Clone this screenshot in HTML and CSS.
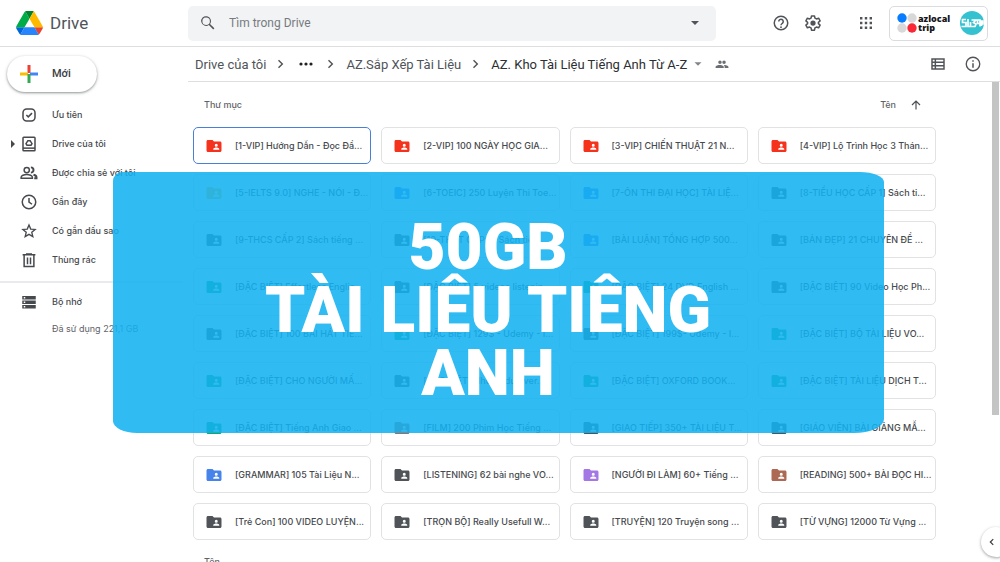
FILE: index.html
```
<!DOCTYPE html>
<html lang="vi">
<head>
<meta charset="utf-8">
<title>AZ. Kho Tài Liệu Tiếng Anh Từ A-Z - Drive</title>
<link rel="stylesheet" href="styles.css">
</head>
<body>
<svg class="defs" aria-hidden="true">
  <symbol id="folder" viewBox="0 0 24 24"><path fill="currentColor" d="M20 6h-8l-2-2H4C2.900 4 2 4.900 2 6v12c0 1.100.9 2 2 2h16c1.100 0 2-.9 2-2V8c0-1.100-.9-2-2-2z"/><path fill="#fff" d="M15 9a2 2 0 1 1 0 4 2 2 0 0 1 0-4zm4 8h-8v-1c0-1.330 2.670-2 4-2s4 .67 4 2z"/></symbol>
  <symbol id="chevron" viewBox="0 0 24 24"><path fill="currentColor" d="M9 5.500 7.500 7l5 5-5 5L9 18.500l6.500-6.500z"/></symbol>
  <symbol id="caret" viewBox="0 0 24 24"><path fill="currentColor" d="m6 9 6 6 6-6z"/></symbol>
</svg>
<div class="app">
  <header class="top">
    <a class="brand" href="#">
      <svg class="logo" viewBox="0 0 87.300 78" aria-hidden="true">
        <path fill="#0066da" d="m6.600 66.850 3.850 6.650c.8 1.400 1.950 2.500 3.300 3.300l13.750-23.800H0c0 1.550.4 3.100 1.200 4.500z"/>
        <path fill="#00ac47" d="M43.650 25 29.900 1.200c-1.350.8-2.500 1.900-3.300 3.300L1.200 48.500A9 9 0 0 0 0 53h27.500z"/>
        <path fill="#ea4335" d="M73.550 76.800c1.350-.8 2.500-1.900 3.300-3.300l1.600-2.750L86.100 57.500c.8-1.400 1.200-2.950 1.200-4.500H59.800l5.850 11.500z"/>
        <path fill="#00832d" d="M43.650 25 57.400 1.200C56.050.4 54.500 0 52.900 0H34.400c-1.600 0-3.150.45-4.500 1.200z"/>
        <path fill="#2684fc" d="M59.800 53H27.500L13.750 76.800c1.350.8 2.900 1.200 4.500 1.200h50.800c1.600 0 3.150-.45 4.500-1.200z"/>
        <path fill="#ffba00" d="m73.400 26.500-12.700-22c-.8-1.400-1.950-2.500-3.300-3.300L43.650 25 59.800 53h27.450c0-1.550-.4-3.100-1.200-4.500z"/>
      </svg>
      <span>Drive</span>
    </a>
    <form class="search" role="search">
      <button type="button" class="icon-btn" aria-label="Tìm kiếm"><svg class="i18" viewBox="0 0 24 24"><path fill="currentColor" d="M20.500 19 14.700 13.200A6.500 6.500 0 1 0 13.200 14.700L19 20.500zM4.500 9.500a5 5 0 1 1 10 0 5 5 0 0 1-10 0z"/></svg></button>
      <input type="text" aria-label="Tìm trong Drive" placeholder="Tìm trong Drive">
      <button type="button" class="icon-btn" aria-label="Tùy chọn tìm kiếm"><svg class="i16"><use href="#caret"/></svg></button>
    </form>
    <nav class="tools" aria-label="Công cụ">
      <button type="button" class="icon-btn" aria-label="Trợ giúp"><svg class="i18" viewBox="0 0 24 24"><circle cx="12" cy="12" r="9" fill="none" stroke="currentColor" stroke-width="2"/><path d="M9 10a3 3 0 1 1 4.800 2.400C12.700 13.300 12 13.700 12 15" fill="none" stroke="currentColor" stroke-width="2"/><circle cx="12" cy="17.500" r="1.200" fill="currentColor"/></svg></button>
      <button type="button" class="icon-btn" aria-label="Cài đặt"><svg class="i18" viewBox="0 0 24 24"><path d="M10 2.500h4l.6 3 2 1.100 2.900-1 2 3.500-2.300 2v1.800l2.300 2-2 3.500-2.900-1-2 1.100-.6 3h-4l-.6-3-2-1.100-2.900 1-2-3.500 2.300-2v-1.800l-2.300-2 2-3.500 2.900 1 2-1.100z" fill="none" stroke="currentColor" stroke-width="2" stroke-linejoin="round"/><circle cx="12" cy="12" r="3.500" fill="currentColor"/></svg></button>
      <button type="button" class="icon-btn apps" aria-label="Ứng dụng"><svg class="i18" viewBox="0 0 24 24"><path fill="currentColor" d="M4 4h3.200v3.200H4zm6.400 0h3.200v3.200h-3.200zm6.400 0H20v3.200h-3.200zM4 10.400h3.200v3.200H4zm6.400 0h3.200v3.200h-3.200zm6.400 0H20v3.200h-3.200zM4 16.800h3.200V20H4zm6.400 0h3.200V20h-3.200zm6.400 0H20V20h-3.200z"/></svg></button>
    </nav>
    <button type="button" class="account" aria-label="Tài khoản">
      <svg class="dots" viewBox="0 0 20 20"><circle cx="5" cy="5" r="4.700" fill="#087cff"/><circle cx="15" cy="5" r="4.700" fill="#d8d8d8"/><circle cx="5" cy="15" r="4.700" fill="#d8d8d8"/><circle cx="15" cy="15" r="4.700" fill="#fa2836"/></svg>
      <span class="org">azlocal<br>trip</span>
      <svg class="avatar" viewBox="0 0 24 24" aria-hidden="true"><circle cx="12" cy="12" r="12" fill="#35c2d0"/><g fill="none" stroke="#fff" stroke-width="1.700"><path d="M6 8.500H2.500v3H6v4H1.500M8 8v7.500h2.500V11M11.500 9H16l-2.500 2.500 2.500 1.500-1 2.500h-3.500M20 12.500h-2.500V9H20v6.500M21.500 15v-5h1.500v3h-1.500"/></g></svg>
    </button>
  </header>

  <aside class="side">
    <button type="button" class="new"><svg class="plus" viewBox="0 0 18 18"><path fill="#ea4335" d="M7.500 0h3v8h-3z"/><path fill="#fbbc04" d="M0 7.500h8v3H0z"/><path fill="#4285f4" d="M10 7.500h8v3h-8z"/><path fill="#34a853" d="M7.500 10.500V9h3v9h-3z"/></svg>Mới</button>
    <nav class="menu" aria-label="Thư mục chính">
      <a href="#"><i></i><svg class="i18" viewBox="0 0 24 24"><rect x="4" y="4" width="16" height="16" rx="5" fill="none" stroke="currentColor" stroke-width="2"/><path d="m8.500 12 2.500 2.500 5-5" fill="none" stroke="currentColor" stroke-width="2"/></svg>Ưu tiên</a>
      <a href="#"><i class="open"></i><svg class="i18" viewBox="0 0 24 24"><rect x="4" y="3" width="16" height="18" rx="1" fill="none" stroke="currentColor" stroke-width="2"/><path d="M4 17.500h16" stroke="currentColor" stroke-width="2"/><path d="M10.500 7.500h3l2.500 4-1.300 2H9.300L8 11.500z" fill="none" stroke="currentColor" stroke-width="2"/></svg>Drive của tôi</a>
      <a href="#"><i></i><svg class="i18" viewBox="0 0 24 24"><g fill="none" stroke="currentColor" stroke-width="2"><circle cx="9" cy="8" r="3.500"/><path d="M1.500 19v-1.500c0-2 4-3.500 7.500-3.500s7.500 1.500 7.500 3.500V19z"/><path d="M14.500 4.500a3.500 3.500 0 0 1 0 7M18 14.300c2.500.7 4 1.900 4 3.200V19h-3" stroke-width="2.600"/></g></svg>Được chia sẻ với tôi</a>
      <a href="#"><i></i><svg class="i18" viewBox="0 0 24 24"><g fill="none" stroke="currentColor" stroke-width="2"><circle cx="12" cy="12" r="9"/><path d="M12 6.500V12l4 3"/></g></svg>Gần đây</a>
      <a href="#"><i></i><svg class="i18" viewBox="0 0 24 24"><path d="m12 4 2.300 5.400 5.900.5-4.500 3.900 1.400 5.700-5.100-3-5.100 3 1.400-5.700-4.500-3.900 5.900-.5z" fill="none" stroke="currentColor" stroke-width="1.800"/></svg>Có gắn dấu sao</a>
      <a href="#"><i></i><svg class="i18" viewBox="0 0 24 24"><path d="M5.500 6v14.500h13V6M3.500 5h17M8 4h8M10 8.500v9M14 8.500v9" fill="none" stroke="currentColor" stroke-width="2"/></svg>Thùng rác</a>
    </nav>
    <div class="storage">
      <a href="#"><i></i><svg class="i18" viewBox="0 0 24 24"><path fill="currentColor" d="M3 4h18v4.500H3zM3 10h18v4.500H3zM3 16h18v4.500H3z"/><path fill="#fff" d="M5 5.300h2v2H5zM5 11.300h2v2H5zM5 17.300h2v2H5z"/></svg>Bộ nhớ</a>
      <p>Đã sử dụng 221,1 GB</p>
    </div>
  </aside>

  <main class="main">
    <div class="path">
      <nav class="crumbs" aria-label="Đường dẫn">
        <a href="#">Drive của tôi</a>
        <svg class="sep"><use href="#chevron"/></svg>
        <button type="button" class="more" aria-label="Thêm"><svg viewBox="0 0 14 4"><circle cx="2" cy="2" r="1.600"/><circle cx="7" cy="2" r="1.600"/><circle cx="12" cy="2" r="1.600"/></svg></button>
        <svg class="sep"><use href="#chevron"/></svg>
        <a href="#">AZ.Sắp Xếp Tài Liệu</a>
        <svg class="sep"><use href="#chevron"/></svg>
        <a href="#" class="here">AZ. Kho Tài Liệu Tiếng Anh Từ A-Z</a>
      </nav>
      <svg class="drop"><use href="#caret"/></svg>
      <svg class="people" viewBox="0 0 24 24"><path fill="currentColor" d="M8.500 6a3 3 0 1 1 0 6 3 3 0 0 1 0-6zm7 0a3 3 0 1 1 0 6 3 3 0 0 1 0-6zM1 19v-2.500c0-2 4.500-3 7-3s7 1 7 3V19zm15.500 0v-2.500c0-1.300-.6-2.200-1.500-3 3 0 8 1 8 3V19z"/></svg>
      <div class="views">
        <button type="button" class="icon-btn" aria-label="Dạng danh sách"><svg class="i16" viewBox="0 0 24 24"><path d="M3 4.500h18v15H3zM3 9.500h18M3 14.500h18M8 4.500v15" fill="none" stroke="currentColor" stroke-width="2.200"/></svg></button>
        <button type="button" class="icon-btn" aria-label="Chi tiết"><svg class="i18" viewBox="0 0 24 24"><circle cx="12" cy="12" r="9" fill="none" stroke="currentColor" stroke-width="1.800"/><path fill="currentColor" d="M11 7h2v2h-2zm0 4h2v6h-2z"/></svg></button>
      </div>
    </div>
    <div class="scroll">
      <div class="content">
        <div class="heading">
          <h2>Thư mục</h2>
          <button type="button" class="sort">Tên<svg viewBox="0 0 24 24"><path d="M12 21V4M4 12l8-8 8 8" fill="none" stroke="currentColor" stroke-width="2.400"/></svg></button>
        </div>
        <div class="grid">
          <button type="button" class="card red on"><svg><use href="#folder"/></svg><span>[1-VIP] Hướng Dẫn - Đọc Đầ...</span></button>
          <button type="button" class="card red"><svg><use href="#folder"/></svg><span>[2-VIP] 100 NGÀY HỌC GIA...</span></button>
          <button type="button" class="card red"><svg><use href="#folder"/></svg><span>[3-VIP] CHIẾN THUẬT 21 N...</span></button>
          <button type="button" class="card red"><svg><use href="#folder"/></svg><span>[4-VIP] Lộ Trình Học 3 Thán...</span></button>
          <button type="button" class="card yellow"><svg><use href="#folder"/></svg><span>[5-IELTS 9.0] NGHE - NÓI - Đ...</span></button>
          <button type="button" class="card blue"><svg><use href="#folder"/></svg><span>[6-TOEIC] 250 Luyện Thi Toe...</span></button>
          <button type="button" class="card blue"><svg><use href="#folder"/></svg><span>[7-ÔN THI ĐẠI HỌC] TÀI LIỆ...</span></button>
          <button type="button" class="card"><svg><use href="#folder"/></svg><span>[8-TIỂU HỌC CẤP 1] Sách ti...</span></button>
          <button type="button" class="card"><svg><use href="#folder"/></svg><span>[9-THCS CẤP 2] Sách tiếng ...</span></button>
          <button type="button" class="card"><svg><use href="#folder"/></svg><span>[10-THPT CẤP 3] Sách tiến...</span></button>
          <button type="button" class="card blue"><svg><use href="#folder"/></svg><span>[BÀI LUẬN] TỔNG HỢP 500...</span></button>
          <button type="button" class="card"><svg><use href="#folder"/></svg><span>[BẢN ĐẸP] 21 CHUYÊN ĐỀ ...</span></button>
          <button type="button" class="card teal"><svg><use href="#folder"/></svg><span>[ĐẶC BIỆT] Effortless Englis...</span></button>
          <button type="button" class="card"><svg><use href="#folder"/></svg><span>[ĐẶC BIỆT] 5 videos listenin...</span></button>
          <button type="button" class="card teal"><svg><use href="#folder"/></svg><span>[ĐẶC BIỆT] 24 DVD English ...</span></button>
          <button type="button" class="card"><svg><use href="#folder"/></svg><span>[ĐẶC BIỆT] 90 Video Học Ph...</span></button>
          <button type="button" class="card"><svg><use href="#folder"/></svg><span>[ĐẶC BIỆT] 100 BÀI HÁT TIẾ...</span></button>
          <button type="button" class="card teal"><svg><use href="#folder"/></svg><span>[ĐẶC BIỆT] 129$ - Udemy - I...</span></button>
          <button type="button" class="card"><svg><use href="#folder"/></svg><span>[ĐẶC BIỆT] 199$- Udemy - I...</span></button>
          <button type="button" class="card teal"><svg><use href="#folder"/></svg><span>[ĐẶC BIỆT] BỘ TÀI LIỆU VO...</span></button>
          <button type="button" class="card teal"><svg><use href="#folder"/></svg><span>[ĐẶC BIỆT] CHO NGƯỜI MẤ...</span></button>
          <button type="button" class="card"><svg><use href="#folder"/></svg><span>[ĐẶC BIỆT] Những duo ver...</span></button>
          <button type="button" class="card teal"><svg><use href="#folder"/></svg><span>[ĐẶC BIỆT] OXFORD BOOK...</span></button>
          <button type="button" class="card teal"><svg><use href="#folder"/></svg><span>[ĐẶC BIỆT] TÀI LIỆU DỊCH T...</span></button>
          <button type="button" class="card teal"><svg><use href="#folder"/></svg><span>[ĐẶC BIỆT] Tiếng Anh Giao ...</span></button>
          <button type="button" class="card brown"><svg><use href="#folder"/></svg><span>[FILM] 200 Phim Học Tiếng ...</span></button>
          <button type="button" class="card"><svg><use href="#folder"/></svg><span>[GIAO TIẾP] 350+ TÀI LIỆU T...</span></button>
          <button type="button" class="card"><svg><use href="#folder"/></svg><span>[GIÁO VIÊN] BÀI GIẢNG MẪ...</span></button>
          <button type="button" class="card blue"><svg><use href="#folder"/></svg><span>[GRAMMAR] 105 Tài Liệu N...</span></button>
          <button type="button" class="card"><svg><use href="#folder"/></svg><span>[LISTENING] 62 bài nghe VO...</span></button>
          <button type="button" class="card purple"><svg><use href="#folder"/></svg><span>[NGƯỜI ĐI LÀM] 60+ Tiếng ...</span></button>
          <button type="button" class="card brown"><svg><use href="#folder"/></svg><span>[READING] 500+ BÀI ĐỌC HI...</span></button>
          <button type="button" class="card"><svg><use href="#folder"/></svg><span>[Trẻ Con] 100 VIDEO LUYỆN...</span></button>
          <button type="button" class="card"><svg><use href="#folder"/></svg><span>[TRỌN BỘ] Really Usefull W...</span></button>
          <button type="button" class="card"><svg><use href="#folder"/></svg><span>[TRUYỆN] 120 Truyện song ...</span></button>
          <button type="button" class="card"><svg><use href="#folder"/></svg><span>[TỪ VỰNG] 12000 Từ Vựng ...</span></button>
        </div>
        <h2 class="files">Tên</h2>
      </div>
      <div class="track"><div class="thumb"></div></div>
    </div>
  </main>
  <button type="button" class="panel" aria-label="Hiện bảng điều khiển bên"><svg viewBox="0 0 24 24"><path d="m15 5-7 7 7 7" fill="none" stroke="currentColor" stroke-width="3"/></svg></button>
  <section class="banner"><h1>50GB<br>TÀI LIÊU TIÊNG<br>ANH</h1></section>
</div>
</body>
</html>
```
FILE: styles.css
```
* { box-sizing: border-box; }
body { margin: 0; font-family: Roboto, "Noto Sans", sans-serif; color: #3c4043; background: #fff; }
button, input { font: inherit; color: inherit; border: 0; background: none; padding: 0; margin: 0; }
a { color: inherit; text-decoration: none; }
h1, h2, p { margin: 0; }
svg { display: block; flex: none; }
.defs { position: absolute; width: 0; height: 0; }
.i18 { width: 18px; height: 18px; }
.i16 { width: 16px; height: 16px; }
.icon-btn { display: flex; color: #505459; }

.app { position: relative; display: grid; grid-template: 47px minmax(0, 1fr) / 188px minmax(0, 1fr); height: 100vh; overflow: hidden; }

.top { grid-column: 1 / 3; display: flex; align-items: center; border-bottom: 1px solid #dcdee0; padding-right: 12px; }
.brand { width: 188px; flex: none; display: flex; align-items: center; gap: 7px; padding-left: 16px; font-size: 17px; color: #50545a; }
.logo { width: 27px; height: 24px; }
.search { width: 528px; height: 35px; display: flex; align-items: center; gap: 12px; padding: 0 13px 0 11px; background: #f1f3f4; border-radius: 5px; }
.search input { flex: 1; min-width: 0; font-size: 12px; outline: 0; }
.search input::placeholder { color: #777b80; opacity: 1; }
.tools { margin-left: auto; display: flex; align-items: center; gap: 14px; }
.apps { margin-left: 21px; }
.account { display: flex; align-items: center; height: 35px; margin-left: 14px; padding: 0 3px 0 7px; border: 1px solid #dadce0; border-radius: 5px; }
.dots { width: 20px; height: 20px; }
.org { width: 36px; margin-left: 1px; text-align: left; font: 800 9px/9px "Open Sans", sans-serif; color: #17171c; }
.avatar { width: 24px; height: 24px; margin-left: 6px; }

.side { font: 500 9px/12px Inter, Roboto, sans-serif; color: #46494d; }
.new { display: flex; align-items: center; gap: 14px; width: 90px; height: 36px; margin: 9px 0 13px 7px; padding-left: 13px; border-radius: 18px; font: 500 11px/14px Roboto, sans-serif; color: #3c4043; box-shadow: 0 1px 2px #3c404366, 0 1px 3px 1px #3c404326; }
.plus { width: 18px; height: 18px; }
.menu { display: grid; padding-bottom: 2px; border-bottom: 2px solid #e8eaed; margin-right: 5px; grid-auto-rows: 29px; }
.menu a, .storage a { display: flex; align-items: center; white-space: nowrap; height: 20px; }
.menu svg, .storage svg { margin-right: 14px; }
.side i { width: 9px; height: 8px; margin-left: 11px; flex: none; }
.side .open { border-left: 4px solid #46494d; border-top: 4px solid transparent; border-bottom: 4px solid transparent; }
.storage { padding-top: 9px; }
.storage p { padding: 11px 0 0 52px; font-weight: 400; white-space: nowrap; color: #5f6368; }

.main { display: grid; grid-template-rows: 35px minmax(0, 1fr); min-height: 0; }
.path { display: flex; align-items: center; padding: 0 18px 0 7px; border-bottom: 1px solid #dcdee0; }
.crumbs { display: flex; align-items: center; font-size: 13px; color: #505459; white-space: nowrap; }
.sep { width: 16px; height: 16px; margin: 0 7px; }
.here { color: #2c2f33; }
.more svg { width: 14px; height: 4px; margin: 0 3px; fill: #202124; }
.drop { width: 14px; height: 14px; margin-left: 4px; color: #80868b; }
.people { width: 14px; height: 14px; margin-left: 10px; color: #6b6f74; }
.views { margin-left: auto; display: flex; align-items: center; gap: 18px; }
.scroll { display: flex; min-height: 0; overflow: hidden; }
.content { flex: 1; min-width: 0; padding: 0 56px 0 5px; }
.heading { display: flex; align-items: center; justify-content: space-between; height: 45px; padding: 0 14px 0 11px; }
h2 { font: 500 9px/12px Inter, Roboto, sans-serif; color: #5f6368; }
.sort { display: flex; align-items: center; gap: 14px; font: 500 9px/12px Inter, Roboto, sans-serif; color: #5f6368; }
.sort svg { width: 12px; height: 12px; color: #4d5156; }
.grid { display: grid; grid-template-columns: repeat(4, minmax(0, 1fr)); grid-auto-rows: 37px; gap: 10px; }
.card { display: flex; align-items: center; gap: 12px; padding: 0 4px 0 11px; border: 1px solid #e0e2e4; border-radius: 5px; font: 500 9px/12px Inter, Roboto, sans-serif; text-align: left; white-space: nowrap; overflow: hidden; }
.card span { color: #46494d; }
.card svg { width: 18px; height: 18px; color: #505458; }
.card.on { border-color: #4a7fd8; }
.card.red svg { color: #f5321b; }
.card.yellow svg { color: #f5c043; }
.card.blue svg { color: #4683ea; }
.card.teal svg { color: #16a765; }
.card.purple svg { color: #a478e4; }
.card.brown svg { color: #ac6a55; }
.files { padding: 16px 0 0 11px; }
.track { width: 8px; }
.thumb { width: 7px; height: 333px; background: #c4c4c4; }

.panel { position: absolute; right: -11px; bottom: 5px; width: 30px; height: 30px; padding-left: 6px; border-radius: 50%; background: #fff; box-shadow: 0 1px 3px #3c404380; }
.panel svg { width: 10px; height: 10px; }
.banner { position: absolute; left: 113px; right: 116px; top: 172px; height: 261px; padding: 44px 21px 0 0; border-radius: 9px 24px 30px 24px / 9px 10px 14px 12px; background: rgb(18 177 241 / 87%); color: #fff; text-align: center; }
.banner h1 { font-size: 64px; line-height: 63px; font-weight: 900; white-space: nowrap; }
```
